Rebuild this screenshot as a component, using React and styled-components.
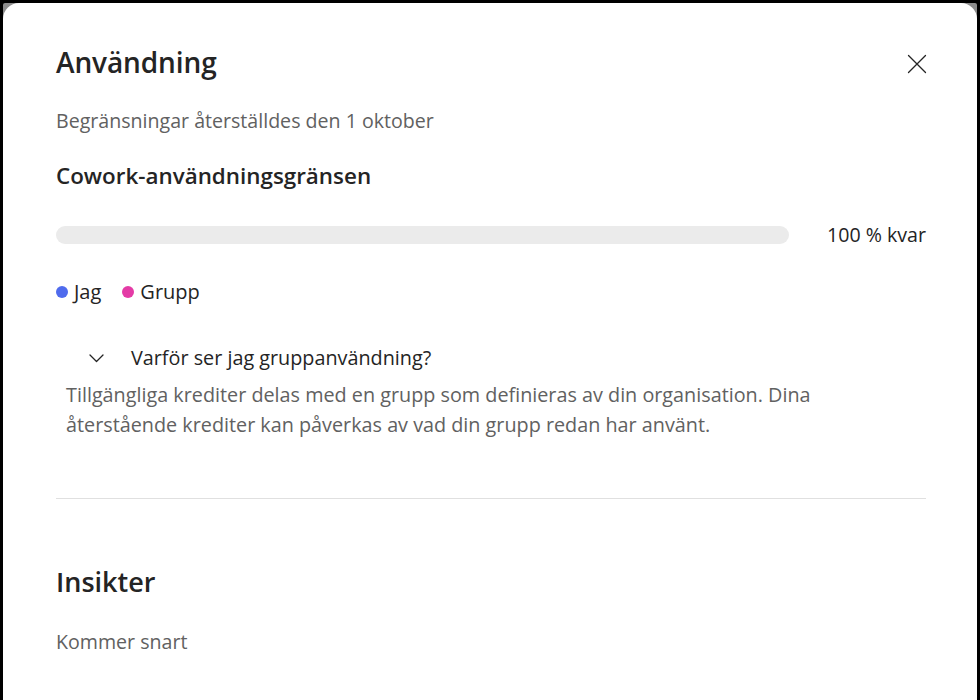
import React from "react";
import styled, { createGlobalStyle } from "styled-components";

const Global = createGlobalStyle`
  html, body { margin: 0; padding: 0; height: 100%; background: #000; }
  #root { height: 100%; }
  * { box-sizing: border-box; }
`;

const Frame = styled.div`
  height: 700px;
  width: 980px;
  padding: 3px 3px 0 3px;
  background: #000;
  overflow: hidden;
`;

const Backdrop = styled.div`
  height: 100%;
  background: #8d8d8d;
  border-radius: 2px 2px 0 0;
`;

const Dialog = styled.div`
  height: 100%;
  background: #fff;
  border-radius: 16px 16px 0 0;
  padding: 38px 51px 0 53px;
  font-family: "Open Sans", "Noto Sans", sans-serif;
  color: #242424;
`;

const Header = styled.div`
  display: flex;
  align-items: center;
  justify-content: space-between;
  height: 42px;
`;

const Title = styled.h2`
  margin: 0;
  font-size: 28px;
  font-weight: 600;
  letter-spacing: -0.1px;
`;

const CloseButton = styled.button`
  border: none;
  background: none;
  padding: 0;
  width: 24px;
  height: 24px;
  display: flex;
  align-items: center;
  justify-content: center;
  margin: 4px -3px 0 0;
  color: #242424;
  cursor: pointer;
`;

const Muted = styled.p`
  margin: ${(p) => p.$mt || 0}px 0 0;
  font-size: 19.6px;
  line-height: 28px;
  color: #616161;
`;

const SectionTitle = styled.h3`
  margin: 26px 0 0;
  font-size: 22.4px;
  line-height: 30px;
  font-weight: 600;
`;

const BarRow = styled.div`
  display: flex;
  align-items: center;
  gap: 38px;
  margin-top: 30px;
`;

const Track = styled.div`
  flex: 1;
  height: 18px;
  border-radius: 9px;
  background: #ebebeb;
`;

const BarLabel = styled.span`
  font-size: 19.6px;
  line-height: 28px;
  color: #242424;
  white-space: nowrap;
`;

const Legend = styled.div`
  display: flex;
  align-items: center;
  gap: 21px;
  margin-top: 29px;
`;

const LegendItem = styled.div`
  display: flex;
  align-items: center;
  gap: 6px;
  font-size: 20px;
  line-height: 28px;
  color: #242424;
`;

const Dot = styled.span`
  width: 12px;
  height: 12px;
  border-radius: 50%;
  background: ${(p) => p.$color};
`;

const AccordionHeader = styled.button`
  display: flex;
  align-items: center;
  gap: 27px;
  margin-top: 38px;
  margin-left: 33px;
  padding: 0;
  border: none;
  background: none;
  font-family: inherit;
  font-size: 19.8px;
  line-height: 28px;
  color: #242424;
  cursor: pointer;
`;

const Panel = styled.p`
  margin: 8px 0 0 10px;
  font-size: 19.8px;
  line-height: 30px;
  color: #616161;
  max-width: 800px;
`;

const Divider = styled.hr`
  border: none;
  border-top: 1px solid #e0e0e0;
  margin: 58px 0 0;
`;

const BigTitle = styled.h2`
  margin: 65px 0 0;
  font-size: 27px;
  font-weight: 600;
  line-height: 36px;
`;

export default function App() {
  return (
    <>
      <Global />
      <Frame>
        <Backdrop>
          <Dialog>
            <Header>
              <Title>Användning</Title>
              <CloseButton aria-label="Stäng">
                <svg width="20" height="20" viewBox="0 0 20 20" fill="none" stroke="currentColor" strokeWidth="1.3" strokeLinecap="round">
                  <path d="M1.5 1.5 L18.5 18.5 M18.5 1.5 L1.5 18.5" />
                </svg>
              </CloseButton>
            </Header>
            <Muted $mt={24}>Begränsningar återställdes den 1 oktober</Muted>
            <SectionTitle>Cowork-användningsgränsen</SectionTitle>
            <BarRow>
              <Track />
              <BarLabel>100 % kvar</BarLabel>
            </BarRow>
            <Legend>
              <LegendItem><Dot $color="#4f6bed" />Jag</LegendItem>
              <LegendItem><Dot $color="#e43ba6" />Grupp</LegendItem>
            </Legend>
            <AccordionHeader>
              <svg width="15" height="9" viewBox="0 0 15 9" fill="none" stroke="currentColor" strokeWidth="1.3" strokeLinecap="round" strokeLinejoin="round">
                <path d="M1 1 L7.5 7.5 L14 1" />
              </svg>
              Varför ser jag gruppanvändning?
            </AccordionHeader>
            <Panel>
              Tillgängliga krediter delas med en grupp som definieras av din organisation. Dina återstående krediter kan påverkas av vad din grupp redan har använt.
            </Panel>
            <Divider />
            <BigTitle>Insikter</BigTitle>
            <Muted $mt={28}>Kommer snart</Muted>
          </Dialog>
        </Backdrop>
      </Frame>
    </>
  );
}
